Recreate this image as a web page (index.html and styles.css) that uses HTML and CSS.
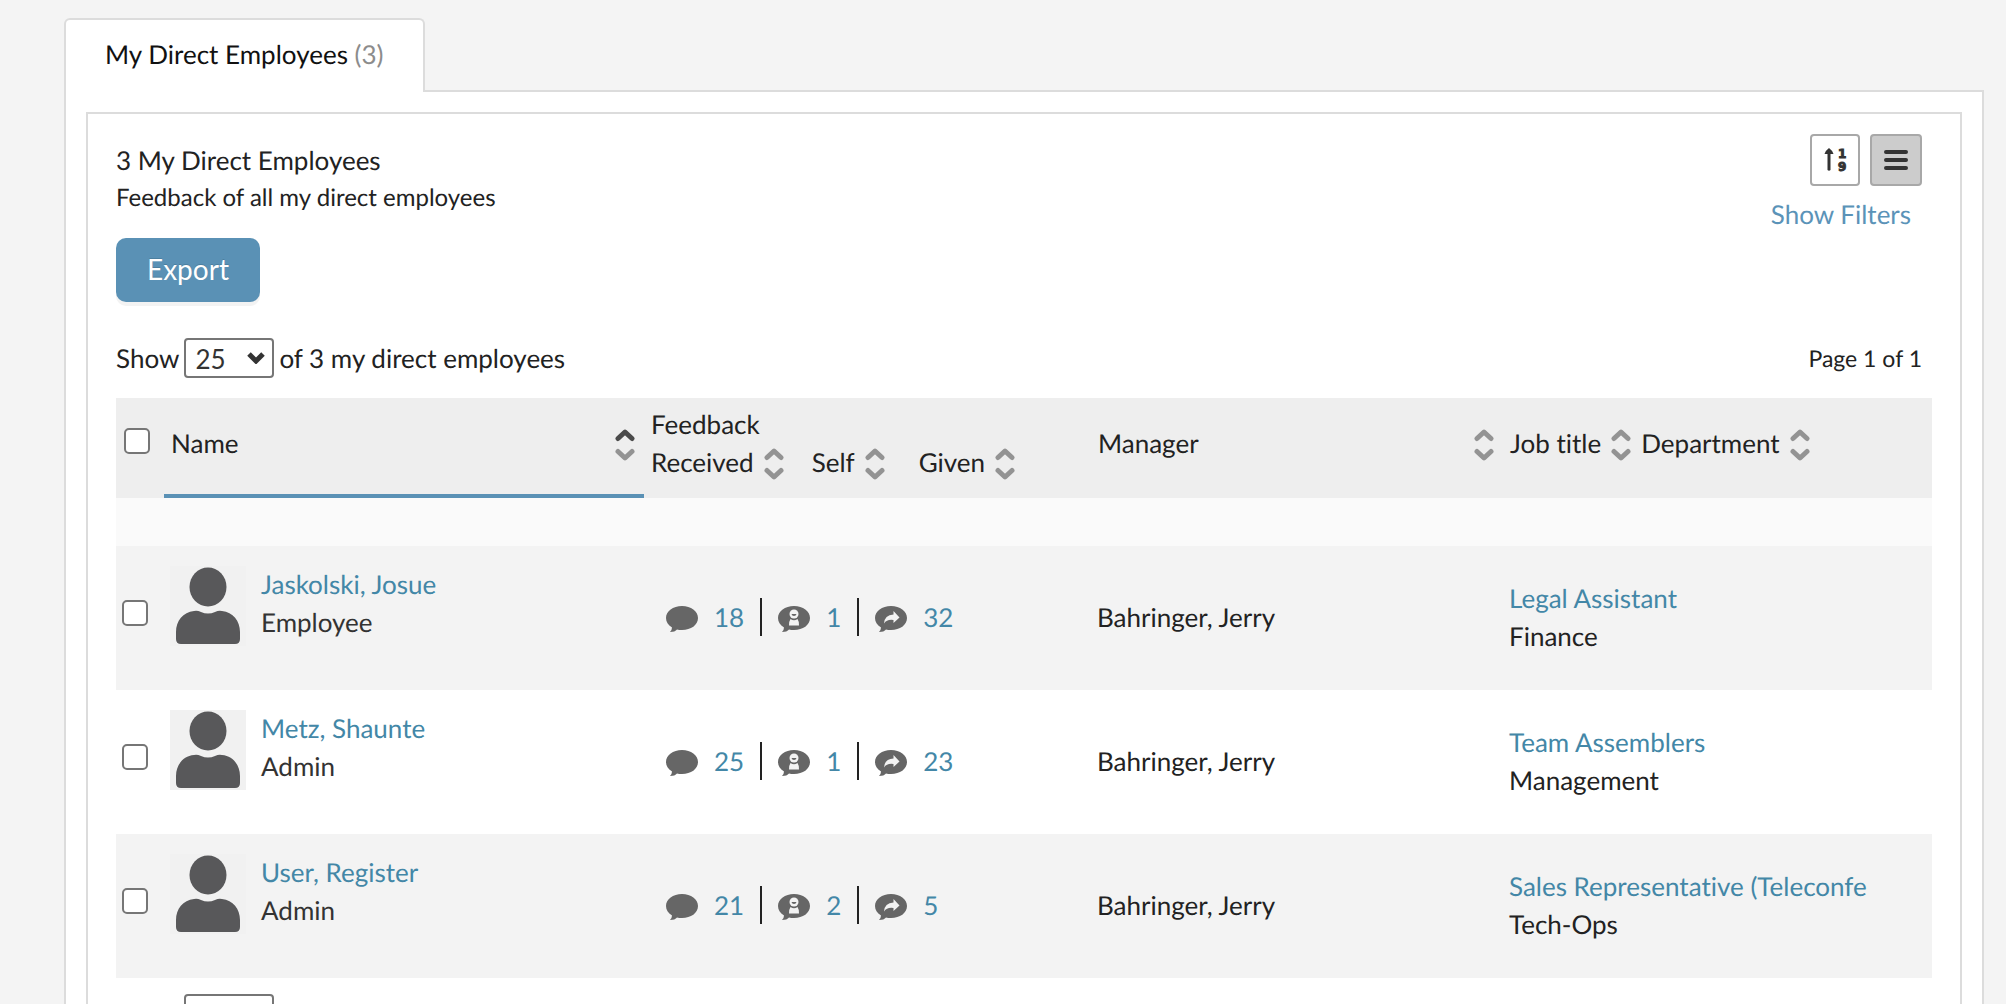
FILE: index.html
```html
<!DOCTYPE html>
<html lang="en">
<head>
<meta charset="utf-8">
<title>My Direct Employees</title>
<link rel="stylesheet" href="styles.css">
</head>
<body>
<svg class="sprite" aria-hidden="true">
  <symbol id="sort" viewBox="0 0 20 32">
    <path class="up" d="M3 9.500 L10 3 L17 9.500"/>
    <path class="down" d="M3 22.500 L10 29 L17 22.500"/>
  </symbol>
  <symbol id="person" viewBox="0 0 76 80">
    <ellipse cx="38" cy="21" rx="18.500" ry="19.500"/>
    <path d="M24 45 Q27 44 31 46 Q38 49 45 46 Q49 44 52 45 C63 46 70 55 70 66 V73 Q70 78 65 78 H11 Q6 78 6 73 V66 C6 55 13 46 24 45 Z"/>
  </symbol>
  <symbol id="bubble" viewBox="0 0 32 26">
    <path d="M16 0 C25 0 32 5 32 12 C32 19 25 24 16 24 Q13 24 11 23.500 Q9 26 4 26 Q6 24 6 21.500 C2 19 0 16 0 12 C0 5 7 0 16 0 Z"/>
  </symbol>
  <symbol id="bubble-self" viewBox="0 0 32 26">
    <use href="#bubble"/>
    <g fill="#f3f3f3"><circle cx="16" cy="8" r="4.500"/><path d="M12.500 13 Q16 15.500 19.500 13 Q21 15 21 19.500 H11 Q11 15 12.500 13 Z"/></g>
    <path d="M13.500 8 H18.500 Q18 10 16 10 Q14 10 13.500 8 Z"/>
  </symbol>
  <symbol id="bubble-given" viewBox="0 0 32 26">
    <use href="#bubble"/>
    <path fill="#f3f3f3" d="M18.500 5 L24.500 11.500 L18.500 17 V14 Q12 13 9 17.500 Q9.500 9 18.500 8.500 Z"/>
  </symbol>
</svg>

<main class="page">
  <nav class="tabs"><a class="tab" href="#employees">My Direct Employees <span class="count">(3)</span></a></nav>
  <section class="panel" id="employees">
    <div class="box">
      <header class="top">
        <div>
          <h1 class="title">3 My Direct Employees</h1>
          <p class="subtitle">Feedback of all my direct employees</p>
          <button class="export" type="button">Export</button>
        </div>
        <div class="tools">
          <div class="views">
            <button class="view order" type="button" aria-label="Sort order">
              <svg width="24" height="28" viewBox="0 0 24 28"><path d="M6 2 Q10 5 10.500 8 H7.500 V24 Q6 25.500 4.500 24 V8 H1.500 Q2 5 6 2 Z"/><text x="15" y="12">1</text><text x="15" y="25">9</text></svg>
            </button>
            <button class="view list" type="button" aria-label="List view">
              <svg width="24" height="24" viewBox="0 0 24 24"><path d="M2 4h20M2 12h20M2 20h20"/></svg>
            </button>
          </div>
          <a class="filters" href="#filters">Show Filters</a>
        </div>
      </header>

      <div class="pager">
        <label for="size">Show</label>
        <select class="size" id="size"><option>25</option><option>50</option></select>
        <span>of 3 my direct employees</span>
        <span class="pages">Page 1 of 1</span>
      </div>

      <table class="grid">
        <colgroup><col class="c-check"><col class="c-name"><col class="c-feedback"><col class="c-manager"><col></colgroup>
        <thead>
          <tr>
            <th class="check head-check"><input type="checkbox" aria-label="Select all"></th>
            <th class="sorted"><div class="spread">Name <svg class="sort asc"><use href="#sort"/></svg></div></th>
            <th>
              <div>Feedback</div>
              <div class="kinds">
                <span class="kind">Received <svg class="sort"><use href="#sort"/></svg></span>
                <span class="kind">Self <svg class="sort"><use href="#sort"/></svg></span>
                <span class="kind given">Given <svg class="sort"><use href="#sort"/></svg></span>
              </div>
            </th>
            <th><div class="spread">Manager <svg class="sort"><use href="#sort"/></svg></div></th>
            <th><div class="jobs"><span class="kind">Job title <svg class="sort"><use href="#sort"/></svg></span><span class="kind">Department <svg class="sort"><use href="#sort"/></svg></span></div></th>
          </tr>
        </thead>
        <tbody>
          <tr class="gap"><td colspan="5"></td></tr>
          <tr class="row shade">
            <td class="check"><input type="checkbox" aria-label="Select Jaskolski, Josue"></td>
            <td class="who"><div class="person"><svg class="avatar"><use href="#person"/></svg><div><a href="#p1">Jaskolski, Josue</a><div class="role">Employee</div></div></div></td>
            <td><div class="stats">
              <a class="stat" href="#r1"><svg class="bubble"><use href="#bubble"/></svg>18</a>
              <a class="stat" href="#s1"><svg class="bubble"><use href="#bubble-self"/></svg>1</a>
              <a class="stat" href="#g1"><svg class="bubble"><use href="#bubble-given"/></svg>32</a>
            </div></td>
            <td>Bahringer, Jerry</td>
            <td><a href="#j1">Legal Assistant</a><div>Finance</div></td>
          </tr>
          <tr class="row">
            <td class="check"><input type="checkbox" aria-label="Select Metz, Shaunte"></td>
            <td class="who"><div class="person"><svg class="avatar"><use href="#person"/></svg><div><a href="#p2">Metz, Shaunte</a><div class="role">Admin</div></div></div></td>
            <td><div class="stats">
              <a class="stat" href="#r2"><svg class="bubble"><use href="#bubble"/></svg>25</a>
              <a class="stat" href="#s2"><svg class="bubble"><use href="#bubble-self"/></svg>1</a>
              <a class="stat" href="#g2"><svg class="bubble"><use href="#bubble-given"/></svg>23</a>
            </div></td>
            <td>Bahringer, Jerry</td>
            <td><a href="#j2">Team Assemblers</a><div>Management</div></td>
          </tr>
          <tr class="row shade">
            <td class="check"><input type="checkbox" aria-label="Select User, Register"></td>
            <td class="who"><div class="person"><svg class="avatar"><use href="#person"/></svg><div><a href="#p3">User, Register</a><div class="role">Admin</div></div></div></td>
            <td><div class="stats">
              <a class="stat" href="#r3"><svg class="bubble"><use href="#bubble"/></svg>21</a>
              <a class="stat" href="#s3"><svg class="bubble"><use href="#bubble-self"/></svg>2</a>
              <a class="stat" href="#g3"><svg class="bubble"><use href="#bubble-given"/></svg>5</a>
            </div></td>
            <td>Bahringer, Jerry</td>
            <td><a href="#j3">Sales Representative (Teleconfe</a><div>Tech-Ops</div></td>
          </tr>
        </tbody>
      </table>

      <div class="pager bottom">
        <label for="size2">Show</label>
        <select class="size" id="size2"><option>25</option><option>50</option></select>
        <span>of 3 my direct employees</span>
        <span class="pages">Page 1 of 1</span>
      </div>
    </div>
  </section>
</main>
</body>
</html>
```
FILE: styles.css
```css
* { box-sizing: border-box; }

body {
  margin: 0;
  height: 100vh;
  overflow: hidden;
  background: #f4f4f4;
  color: #222;
  font: 26px/38px Lato, "Liberation Sans", sans-serif;
  font-variant-ligatures: none;
  text-rendering: geometricPrecision;
}

a { color: #4387a7; text-decoration: none; }
button, select { font: inherit; }
.sprite { display: none; }

.page { padding: 18px 22px 0 64px; }

/* Tabs and framing */
.tabs { display: flex; margin-bottom: -2px; position: relative; }
.tab {
  padding: 15px 39px 19px;
  border: 2px solid #dcdcdc;
  border-bottom: 0;
  border-radius: 6px 6px 0 0;
  background: #fff;
  color: #111;
}
.count { color: #8c8c8c; }
.panel { padding: 20px; border: 2px solid #dcdcdc; background: #fff; }
.box { padding: 27px 28px 28px; border: 2px solid #dcdcdc; }

/* Heading area */
.top { display: flex; justify-content: space-between; }
.title { margin: 0; font-size: 26px; font-weight: 400; }
.subtitle { margin: 0 0 21px; font-size: 24px; }
.export {
  display: block;
  height: 64px;
  padding: 0 31px 2px;
  border: 0;
  border-radius: 10px;
  background: #5a91b5;
  box-shadow: 0 4px 0 #f3f3f3;
  color: #fff;
  font-size: 28px;
  text-shadow: 0 -1px 0 #4c7f9f;
}
.tools { margin: -7px 10px 0 0; }
.views { display: flex; justify-content: flex-end; gap: 10px; margin-bottom: 9px; }
.view {
  display: flex;
  align-items: center;
  justify-content: center;
  width: 52px;
  height: 52px;
  padding: 0;
  border: 2px solid #a8a8a8;
  border-radius: 4px;
  background: #fff;
  fill: #333;
}
.order { width: 50px; }
.list { background: #ccc; stroke: #333; stroke-width: 4px; stroke-linecap: round; }
.view text { font: 700 12px/12px "DejaVu Sans", sans-serif; stroke: #333; stroke-width: 1px; }
.filters { display: block; padding-right: 11px; color: #5b93b8; text-align: right; }

/* Page size and position */
.pager { display: flex; align-items: center; gap: 5px; margin: 36px 10px 20px 0; }
.bottom { margin: 16px 10px 0 0; }
.size {
  appearance: none;
  width: 90px;
  height: 40px;
  padding: 0 9px;
  border: 2px solid #767676;
  border-radius: 4px;
  background: #fff url("data:image/svg+xml,%3Csvg xmlns='http://www.w3.org/2000/svg' width='18' height='12'%3E%3Cpath d='M2 2 L9 9 L16 2' fill='none' stroke='%23333' stroke-width='5'/%3E%3C/svg%3E") no-repeat right 7px center;
  color: #333;
}
.pages { margin-left: auto; font-size: 23px; }

/* Employee table */
.grid { width: 100%; table-layout: fixed; border-collapse: collapse; }
.c-check { width: 48px; }
.c-name { width: 480px; }
.c-feedback { width: 447px; }
.c-manager { width: 412px; }
.grid th { height: 100px; padding: 0 9px 10px 7px; background: #eee; font-weight: 400; text-align: left; }
.grid .sorted { box-shadow: inset 0 -4px 0 #5a91b5; }
.spread { display: flex; align-items: center; justify-content: space-between; }
.kinds { display: flex; gap: 28px; }
.kind { display: flex; align-items: center; gap: 10px; }
.given { padding-left: 6px; }
.jobs { display: flex; gap: 10px; }
.sort {
  width: 20px;
  height: 32px;
  margin-top: 4px;
  fill: none;
  stroke: #939393;
  stroke-width: 5px;
  stroke-linecap: round;
  stroke-linejoin: round;
}
.up { stroke: var(--up, #939393); }
.asc { --up: #4a4a4a; }
.gap td { height: 48px; background: #fafafa; }
.row { background: #fff; }
.shade { background: #f3f3f3; }
.grid .row td { height: 144px; padding: 0 6px 2px; }
.grid .row .who { padding-top: 19px; vertical-align: top; }
.person { display: flex; gap: 15px; }
.role { color: #333; }
.avatar { width: 76px; height: 80px; margin-top: 1px; background: #f1f1f1; fill: #58585a; }
.grid .row .check { padding-bottom: 10px; }
.grid .head-check { padding: 0 8px 14px; }
input[type="checkbox"] {
  appearance: none;
  display: block;
  width: 26px;
  height: 26px;
  margin: 0;
  border: 2px solid #767676;
  border-radius: 5px;
  background: #fff;
}
.stats { display: flex; }
.stat { display: flex; align-items: center; gap: 16px; padding: 0 16px; }
.stat + .stat { border-left: 2px solid #222; }
.bubble { width: 32px; height: 26px; margin-top: 4px; fill: #666; }
```
